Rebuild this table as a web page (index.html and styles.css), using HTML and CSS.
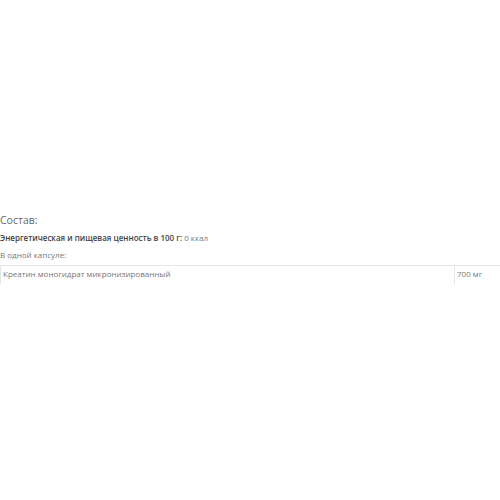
FILE: index.html
```html
<!DOCTYPE html>
<html lang="ru">
<head>
    <meta charset="UTF-8">
    <meta name="viewport" content="width=device-width, initial-scale=1.0">
    <title>Состав</title>
    <link rel="stylesheet" href="styles.css">
</head>
<body>

<div class="composition">
    <div class="composition-title">Состав:</div>
    <div class="composition-energy"><b>Энергетическая и пищевая ценность в 100 г:</b> 0 ккал</div>
    <div class="composition-portion">В одной капсуле:</div>
    <table class="composition-table">
        <tr>
            <td>Креатин моногидрат микронизированный</td>
            <td class="amount">700 мг</td>
        </tr>
    </table>
</div>

</body>
</html>
```

FILE: styles.css
```css
body {
    font-family: "Open Sans", "Liberation Sans", sans-serif;
    margin: 0;
    padding: 0;
    background-color: #fff;
    color: #777;
}

.composition {
    padding-top: 213px;
}

.composition-title {
    font-size: 10.5px;
    line-height: 15px;
    color: #666;
}

.composition-energy {
    font-size: 8px;
    line-height: 11px;
    margin-top: 4px;
    color: #777;
}

.composition-energy b {
    font-weight: 600;
    color: #444;
}

.composition-portion {
    font-size: 8px;
    line-height: 11px;
    margin-top: 6px;
}

.composition-table {
    width: 100%;
    border-collapse: collapse;
    margin-top: 5px;
    font-size: 8px;
}

.composition-table td {
    border-top: 1px solid #e6e6e6;
    border-left: 1px solid #e6e6e6;
    padding: 3px 2px 5px;
    line-height: 10px;
    color: #777;
}

.composition-table .amount {
    width: 41px;
}
```
